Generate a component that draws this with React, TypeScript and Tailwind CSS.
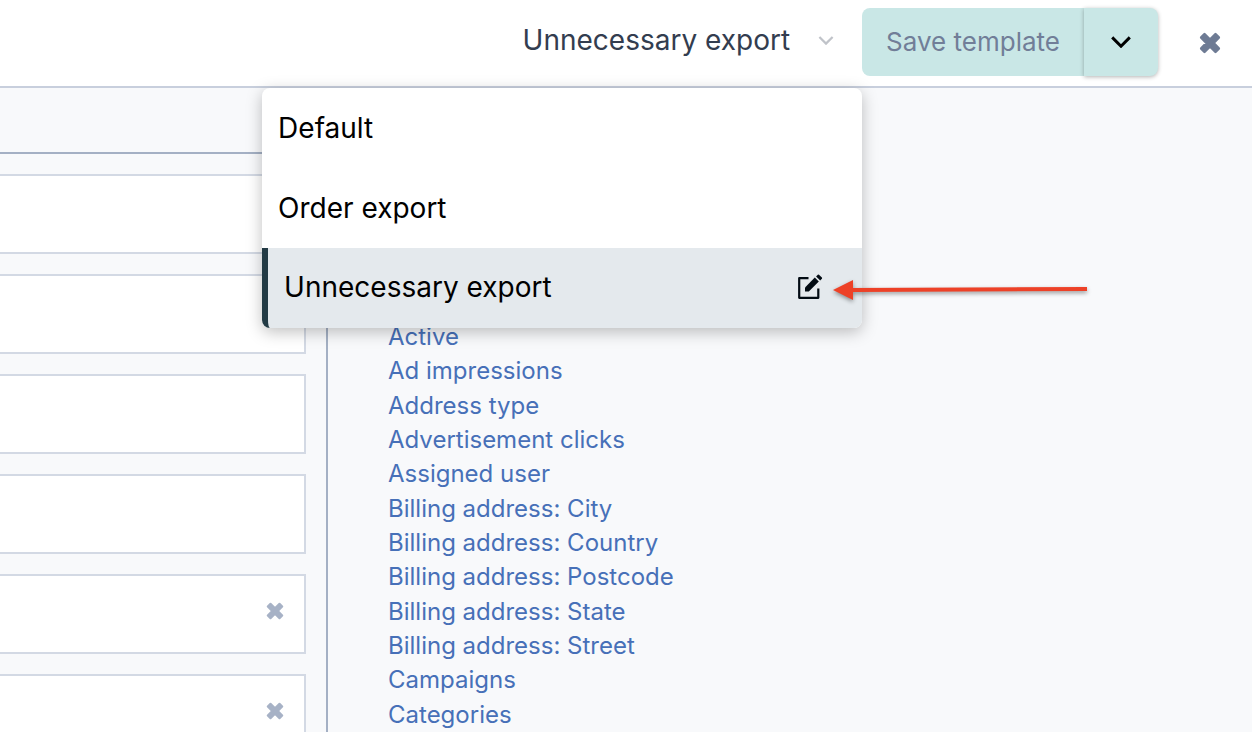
const templates = ['Default', 'Order export', 'Unnecessary export'];

const columns = [
  { id: 1, removable: false },
  { id: 2, removable: false },
  { id: 3, removable: false },
  { id: 4, removable: false },
  { id: 5, removable: true },
  { id: 6, removable: true },
];

const fields = [
  'Active',
  'Ad impressions',
  'Address type',
  'Advertisement clicks',
  'Assigned user',
  'Billing address: City',
  'Billing address: Country',
  'Billing address: Postcode',
  'Billing address: State',
  'Billing address: Street',
  'Campaigns',
  'Categories',
];

function CrossIcon({ className }: { className: string }) {
  return (
    <svg className={className} viewBox="0 0 22 22" aria-hidden="true">
      <path
        d="M5.5 2.2 11 7.6 16.5 2.2 19.8 5.5 14.4 11 19.8 16.5 16.5 19.8 11 14.4 5.5 19.8 2.2 16.5 7.6 11 2.2 5.5Z"
        fill="currentColor"
        stroke="currentColor"
        strokeWidth="2.6"
        strokeLinejoin="round"
      />
    </svg>
  );
}

function ChevronIcon({ className, weight }: { className: string; weight: number }) {
  return (
    <svg className={className} viewBox="0 0 20 12" fill="none" aria-hidden="true">
      <path d="M1.2 1.4 10 10.2 18.8 1.4" stroke="currentColor" strokeWidth={weight} />
    </svg>
  );
}

function EditIcon() {
  return (
    <svg className="w-[26px] h-[26px]" viewBox="0 0 26 26" fill="none" aria-hidden="true">
      <path
        d="M11.5 4.2H2.2V23.8H21.3V14.5"
        stroke="currentColor"
        strokeWidth="2.2"
        strokeLinejoin="round"
      />
      <path d="M8 17.6V13.4L17.8 3.6 21.8 7.6 11.8 17.6Z" fill="currentColor" />
      <path d="M19.1 2.4 20.8 0.7Q21.4 0.2 22 0.7L24.9 3.6Q25.4 4.2 24.9 4.8L23.2 6.5Z" fill="currentColor" />
    </svg>
  );
}

function Arrow() {
  return (
    <svg
      className="absolute left-full top-1/2 -translate-y-1/2 ml-2 w-[260px] h-[30px] pointer-events-none drop-shadow-[0_2px_2px_rgba(0,0,0,0.4)]"
      viewBox="0 0 260 30"
      aria-hidden="true"
    >
      <path d="M2 18 22 8V16L256 15V19L22 20V28Z" fill="#ed4127" />
    </svg>
  );
}

function TemplateMenu() {
  return (
    <ul
      role="listbox"
      aria-label="Templates"
      className="absolute right-0 top-full z-10 w-[600px] rounded-lg bg-white text-black shadow-[0_4px_16px_rgba(0,0,0,0.25)]"
    >
      {templates.map((name) =>
        name === 'Unnecessary export' ? (
          <li
            key={name}
            role="option"
            aria-selected="true"
            className="flex h-20 items-center justify-between rounded-b-lg border-l-[6px] border-[#233b45] bg-[#e4e9ed] pb-0.5 pl-4 pr-[39px]"
          >
            <span>{name}</span>
            <button type="button" aria-label="Edit template" className="relative text-[#020b13]">
              <EditIcon />
              <Arrow />
            </button>
          </li>
        ) : (
          <li key={name} role="option" aria-selected="false" className="flex h-20 items-center px-4">
            {name}
          </li>
        ),
      )}
    </ul>
  );
}

function Header() {
  return (
    <header className="flex h-[88px] shrink-0 justify-end border-b-2 border-[#c8cfdd] bg-white pr-[30px]">
      <div className="relative flex h-[88px] items-center text-[28px]">
        <button
          type="button"
          aria-haspopup="listbox"
          aria-expanded="true"
          className="flex items-center gap-7 pb-2 pr-7 text-[#333d4f]"
        >
          Unnecessary export
          <ChevronIcon className="h-[9px] w-4 text-[#c0c3c9]" weight={3} />
        </button>
        <TemplateMenu />
      </div>
      <div className="mt-2 flex h-[68px]">
        <button
          type="button"
          className="rounded-l-lg bg-[#c9e7e6] px-6 pb-0.5 text-[26px] text-[#717e98]"
        >
          Save template
        </button>
        <button
          type="button"
          aria-label="More save options"
          className="flex w-[74px] items-center justify-center rounded-r-lg bg-[#c9e7e6] text-black shadow-[0_1px_4px_rgba(0,0,0,0.3)]"
        >
          <ChevronIcon className="h-3 w-5" weight={3} />
        </button>
      </div>
      <button
        type="button"
        aria-label="Close"
        className="ml-10 flex w-6 items-center justify-center text-[#6e7b94]"
      >
        <CrossIcon className="size-[22px] shrink-0" />
      </button>
    </header>
  );
}

function App() {
  return (
    <div className="flex h-screen flex-col overflow-hidden bg-[#f8f9fb] font-['Inter',sans-serif]">
      <Header />
      <main className="flex min-h-0 flex-1">
        <section className="w-[328px] shrink-0 border-r-2 border-[#a4b0c4] pt-16">
          <div className="flex flex-col gap-5 border-t-2 border-[#a4b0c4] pr-5 pt-5">
            {columns.map((column) => (
              <div
                key={column.id}
                className="flex h-20 shrink-0 items-center justify-end border-y-2 border-r-2 border-[#d3d9e4] bg-white pb-1.5 pr-5"
              >
                {column.removable && (
                  <button type="button" aria-label="Remove column" className="text-[#a7b2c6]">
                    <CrossIcon className="size-[18px]" />
                  </button>
                )}
              </div>
            ))}
          </div>
        </section>
        <section className="flex-1 pl-[60px] pt-58">
          <ul className="grid h-103 auto-rows-fr text-2xl leading-[34px] text-[#4770b8]">
            {fields.map((field) => (
              <li key={field}>
                <a href="#">{field}</a>
              </li>
            ))}
          </ul>
        </section>
      </main>
    </div>
  );
}

export default App;
